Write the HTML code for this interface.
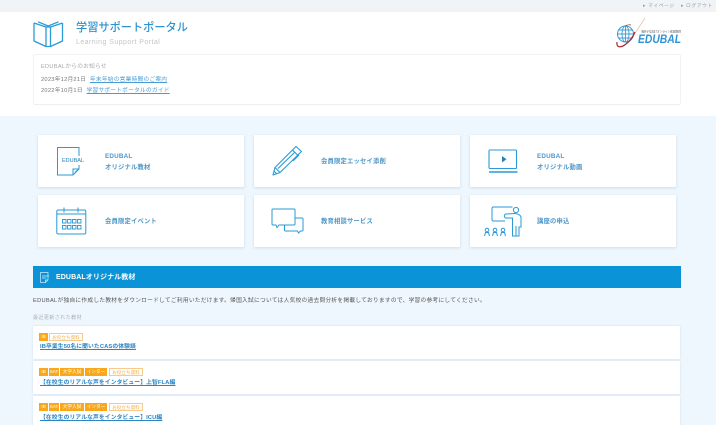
<!DOCTYPE html>
<html lang="ja"><head><meta charset="utf-8"><title>学習サポートポータル</title>
<style>
html,body{margin:0;padding:0;width:716px;height:425px;overflow:hidden}
body{background:#eef7fe;font-family:"Liberation Sans","Noto Sans CJK JP",sans-serif;color:#555}
#w{position:absolute;left:0;top:0;width:716px;height:425px;overflow:hidden;filter:blur(.25px)}
.a{position:absolute;white-space:nowrap}
.top{left:0;top:0;width:716px;height:12px;background:#f1f4f7}
.hdr{left:0;top:12px;width:716px;height:104px;background:#fff}
.news{left:33px;top:54px;width:646px;height:49px;border:1px solid #f1f2f3;border-bottom:1px solid #eceef0;border-radius:2px;background:#fff}
.t{font-size:5.7px;line-height:8px;color:#777;letter-spacing:.26px}
.t a{color:#4a9bd4;text-decoration:underline}
.card{width:206px;height:52px;background:#fff;box-shadow:0 1px 3px rgba(90,120,150,.22);border-radius:1px}
.lbl{font-size:6.3px;line-height:10px;color:#4d97c9;font-weight:700;letter-spacing:.2px;white-space:nowrap}
svg{position:absolute;overflow:visible}
.item{left:33px;width:647px;height:32.5px;background:#fff;box-shadow:0 0 2px rgba(120,150,190,.25)}
.tag{position:absolute;top:0;height:8px;line-height:8px;font-size:4.6px;text-align:center;color:#fff;background:#f9a81c;white-space:nowrap}
.tag.o{background:#fff;color:#f5b04a;border:.6px solid #f7c98a;box-sizing:border-box}
.link{font-size:5.8px;line-height:9px;color:#2b86c5;font-weight:700;text-decoration:underline;letter-spacing:.1px}
</style></head><body><div id="w">
<div class="a top"></div>
<div class="a" style="left:643px;top:2.500px;font-size:4.800px;line-height:8px;color:#999;letter-spacing:.6px">▸ マイページ</div>
<div class="a" style="left:681px;top:2.500px;font-size:4.800px;line-height:8px;color:#999;letter-spacing:.6px">▸ ログアウト</div>
<div class="a hdr"></div>

<svg style="left:33px;top:20px" width="30" height="27" viewBox="0 0 30 27" fill="none" stroke="#2b9ad6" stroke-width="1.300" stroke-linejoin="round">
<path d="M1 3 V21 L13 26.500 H17.500 L29.500 21 V3"/><path d="M1 3 L13 7 V26.500"/><path d="M29.500 3 L17.500 7 V26.500"/><path d="M13 7 H17.500"/><path d="M5 1.800 L15.200 6 L25.500 1.800"/></svg>
<div class="a" style="left:76px;top:21px;font-size:11.200px;line-height:15px;color:#2f93cf;font-weight:500;letter-spacing:0">学習サポートポータル</div>
<div class="a" style="left:76px;top:37.500px;font-size:7px;line-height:10px;color:#c2c5c8;letter-spacing:.45px">Learning Support Portal</div>

<svg style="left:616px;top:18px" width="66" height="32" viewBox="0 0 66 32" fill="none">
<circle cx="9.500" cy="16" r="8" stroke="#3d9bd0" stroke-width="1"/>
<ellipse cx="9.500" cy="16" rx="3.500" ry="8" stroke="#3d9bd0" stroke-width=".9"/>
<path d="M1.500 16H17.500M2.500 12H16.500M2.500 20H16.500M9.500 8V24" stroke="#3d9bd0" stroke-width=".9"/>
<path d="M10 26 C15 21 22 11 29 0" stroke="#e9b9a6" stroke-width=".7"/>
<path d="M1 24 C0 30 5 30 10 26 C14 23 17 19 19 14" stroke="#a8232e" stroke-width="1.200"/>
<path d="M9 8 C12 6 14 7 15 7" stroke="#a8232e" stroke-width=".7"/>
<text x="25" y="14.500" font-family="Liberation Sans,Noto Sans CJK JP,sans-serif" font-size="3" fill="#666" textLength="40">海外子女向けオンライン家庭教師</text>
<text x="22" y="25" font-family="Liberation Sans,sans-serif" font-size="12" font-weight="700" font-style="italic" fill="#2e93d6" textLength="43" lengthAdjust="spacingAndGlyphs">EDUBAL</text>
</svg>

<div class="a news"></div>
<div class="a t" style="left:41px;top:63px;color:#a5a8ab">EDUBALからのお知らせ</div>
<div class="a t" style="left:41px;top:75.500px">2023年12月21日 &nbsp;<a>年末年始の営業時間のご案内</a></div>
<div class="a t" style="left:41px;top:87px">2022年10月1日 &nbsp;<a>学習サポートポータルのガイド</a></div>

<div class="a card" style="left:38px;top:135px"></div>
<div class="a card" style="left:254px;top:135px"></div>
<div class="a card" style="left:470px;top:135px"></div>
<div class="a card" style="left:38px;top:195px"></div>
<div class="a card" style="left:254px;top:195px"></div>
<div class="a card" style="left:470px;top:195px"></div>

<!-- doc icon -->
<svg style="left:56px;top:146px" width="28" height="30" viewBox="0 0 28 30" fill="none" stroke="#2b9ad6" stroke-width="1">
<path d="M17 29 H1.500 V1.500 H23 V23 Z"/><path d="M17 29 V23 H23"/><path d="M19 26.500 L21.500 24"/>
<rect x="21" y="10" width="4" height="9" fill="#fff" stroke="none"/>
<text x="6" y="16" font-family="Liberation Sans,sans-serif" font-size="5.500" fill="#3f8fc4" stroke="#3f8fc4" stroke-width=".1" textLength="22">EDUBAL</text></svg>
<div class="a lbl" style="left:105px;top:152px;line-height:10.500px">EDUBAL<br>オリジナル教材</div>

<!-- pencil -->
<svg style="left:272px;top:145px" width="32" height="32" viewBox="0 0 32 32" fill="none" stroke="#2b9ad6" stroke-width="1.100" stroke-linejoin="round">
<path d="M1 30 L3 22.500 L24 1.500 L29.500 6.500 L8 27.500 Z"/><path d="M3 22.500 L8 27.500"/><path d="M2 26 L5 29"/><path d="M20.500 5 L26 10.500"/><path d="M6 23.500 L23 7"/><path d="M21 16 L27 10"/></svg>
<div class="a lbl" style="left:321px;top:157px">会員限定エッセイ添削</div>

<!-- video -->
<svg style="left:488px;top:149px" width="30" height="25" viewBox="0 0 30 25" fill="none" stroke="#2b9ad6" stroke-width="1.100">
<rect x="1" y="1" width="27.500" height="18.500" rx="1"/><path d="M1 23 H29.500" stroke-width="1.400"/><path d="M14 7 L18.500 10.200 L14 13.500 Z" fill="#2b7fb8" stroke="none"/></svg>
<div class="a lbl" style="left:537px;top:152px;line-height:10.500px">EDUBAL<br>オリジナル動画</div>

<!-- calendar -->
<svg style="left:56px;top:207px" width="31" height="28" viewBox="0 0 31 28" fill="none" stroke="#2b9ad6" stroke-width="1">
<rect x=".8" y="3" width="29" height="24" rx="1.500"/><path d="M1 7 H30"/><path d="M8 .5 V5.500M22 .5 V5.500"/>
<path d="M6.500 12.500h3.500v3.500h-3.500zM11.500 12.500h3.500v3.500h-3.500zM16.500 12.500h3.500v3.500h-3.500zM21.500 12.500h3.500v3.500h-3.500zM6.500 18.500h3.500v3.500h-3.500zM11.500 18.500h3.500v3.500h-3.500zM16.500 18.500h3.500v3.500h-3.500zM21.500 18.500h3.500v3.500h-3.500z" stroke-width=".9"/></svg>
<div class="a lbl" style="left:105px;top:217px">会員限定イベント</div>

<!-- chat -->
<svg style="left:271px;top:208px" width="33" height="27" viewBox="0 0 33 27" fill="none" stroke="#2b9ad6" stroke-width="1">
<path d="M2 1 H23 Q24 1 24 2 V16 Q24 17 23 17 H8 L6 19.500 L5 17 H2 Q1 17 1 16 V2 Q1 1 2 1 Z"/>
<path d="M24.500 10 H31 Q32 10 32 11 V22 Q32 23 31 23 H29.500 L27.500 25 L26.500 23 H14.500 Q13.500 23 13.500 22 V17.500"/></svg>
<div class="a lbl" style="left:321px;top:217px">教育相談サービス</div>

<!-- lecture -->
<svg style="left:484px;top:206px" width="39" height="32" viewBox="0 0 39 32" fill="none" stroke="#2b9ad6" stroke-width="1">
<path d="M28.500 1 H9.500 Q8 1 8 2.500 V13.500 Q8 15 9.500 15 H21"/>
<circle cx="32" cy="4" r="2.600"/>
<path d="M22 8 L31 7.500 Q36 8 37 11 V21 H35 V30 H28.500 V12 H22 Q20.500 12 20.500 10 Q20.500 8 22 8 Z"/>
<path d="M32 20 V30"/>
<circle cx="3" cy="24" r="1.800"/><path d="M.5 30 L1.500 26.500 H4.500 L5.500 30"/>
<circle cx="11" cy="24" r="1.800"/><path d="M8.500 30 L9.500 26.500 H12.500 L13.500 30"/>
<circle cx="19" cy="24" r="1.800"/><path d="M16.500 30 L17.500 26.500 H20.500 L21.500 30"/></svg>
<div class="a lbl" style="left:537px;top:217px">講座の申込</div>

<!-- section -->
<div class="a" style="left:33px;top:266px;width:648px;height:22px;background:#0a93d6"></div>
<svg style="left:40px;top:272px" width="9" height="11" viewBox="0 0 9 11" fill="none" stroke="#cfeafa" stroke-width=".7"><path d="M5.500 10.500 H.5 V.5 H8 V8 Z"/><path d="M5.500 10.500 V8 H8"/><path d="M2 4 H9M2 6 H6"/></svg>
<div class="a" style="left:56px;top:273px;font-size:7px;line-height:10px;font-weight:700;color:#fff;letter-spacing:.1px">EDUBALオリジナル教材</div>
<div class="a" style="left:33px;top:297px;font-size:5.700px;line-height:8px;color:#555;letter-spacing:.29px">EDUBALが独自に作成した教材をダウンロードしてご利用いただけます。帰国入試については人気校の過去問分析を掲載しておりますので、学習の参考にしてください。</div>
<div class="a" style="left:33px;top:314px;font-size:5px;line-height:8px;color:#aab0b5;letter-spacing:.45px">最近更新された教材</div>

<div class="a item" style="top:326px"></div>
<div class="a item" style="top:361px"></div>
<div class="a item" style="top:396px"></div>

<div class="a" style="left:0;top:333px;width:0;height:8px">
<span class="tag" style="left:39px;width:9px">IB</span><span class="tag o" style="left:49px;width:34px">お役立ち資料</span></div>
<div class="a link" style="left:40px;top:343px">IB卒業生50名に聞いたCASの体験談</div>

<div class="a" style="left:0;top:368px;width:0;height:8px">
<span class="tag" style="left:39px;width:9px">IB</span><span class="tag" style="left:49px;width:10px">SAT</span><span class="tag" style="left:60px;width:24px">大学入試</span><span class="tag" style="left:85px;width:22px">インター</span><span class="tag o" style="left:109px;width:34px">お役立ち資料</span></div>
<div class="a link" style="left:40px;top:379px">【在校生のリアルな声をインタビュー】上智FLA編</div>

<div class="a" style="left:0;top:403px;width:0;height:8px">
<span class="tag" style="left:39px;width:9px">IB</span><span class="tag" style="left:49px;width:10px">SAT</span><span class="tag" style="left:60px;width:24px">大学入試</span><span class="tag" style="left:85px;width:22px">インター</span><span class="tag o" style="left:109px;width:34px">お役立ち資料</span></div>
<div class="a link" style="left:40px;top:414px">【在校生のリアルな声をインタビュー】ICU編</div>
</div></body></html>
